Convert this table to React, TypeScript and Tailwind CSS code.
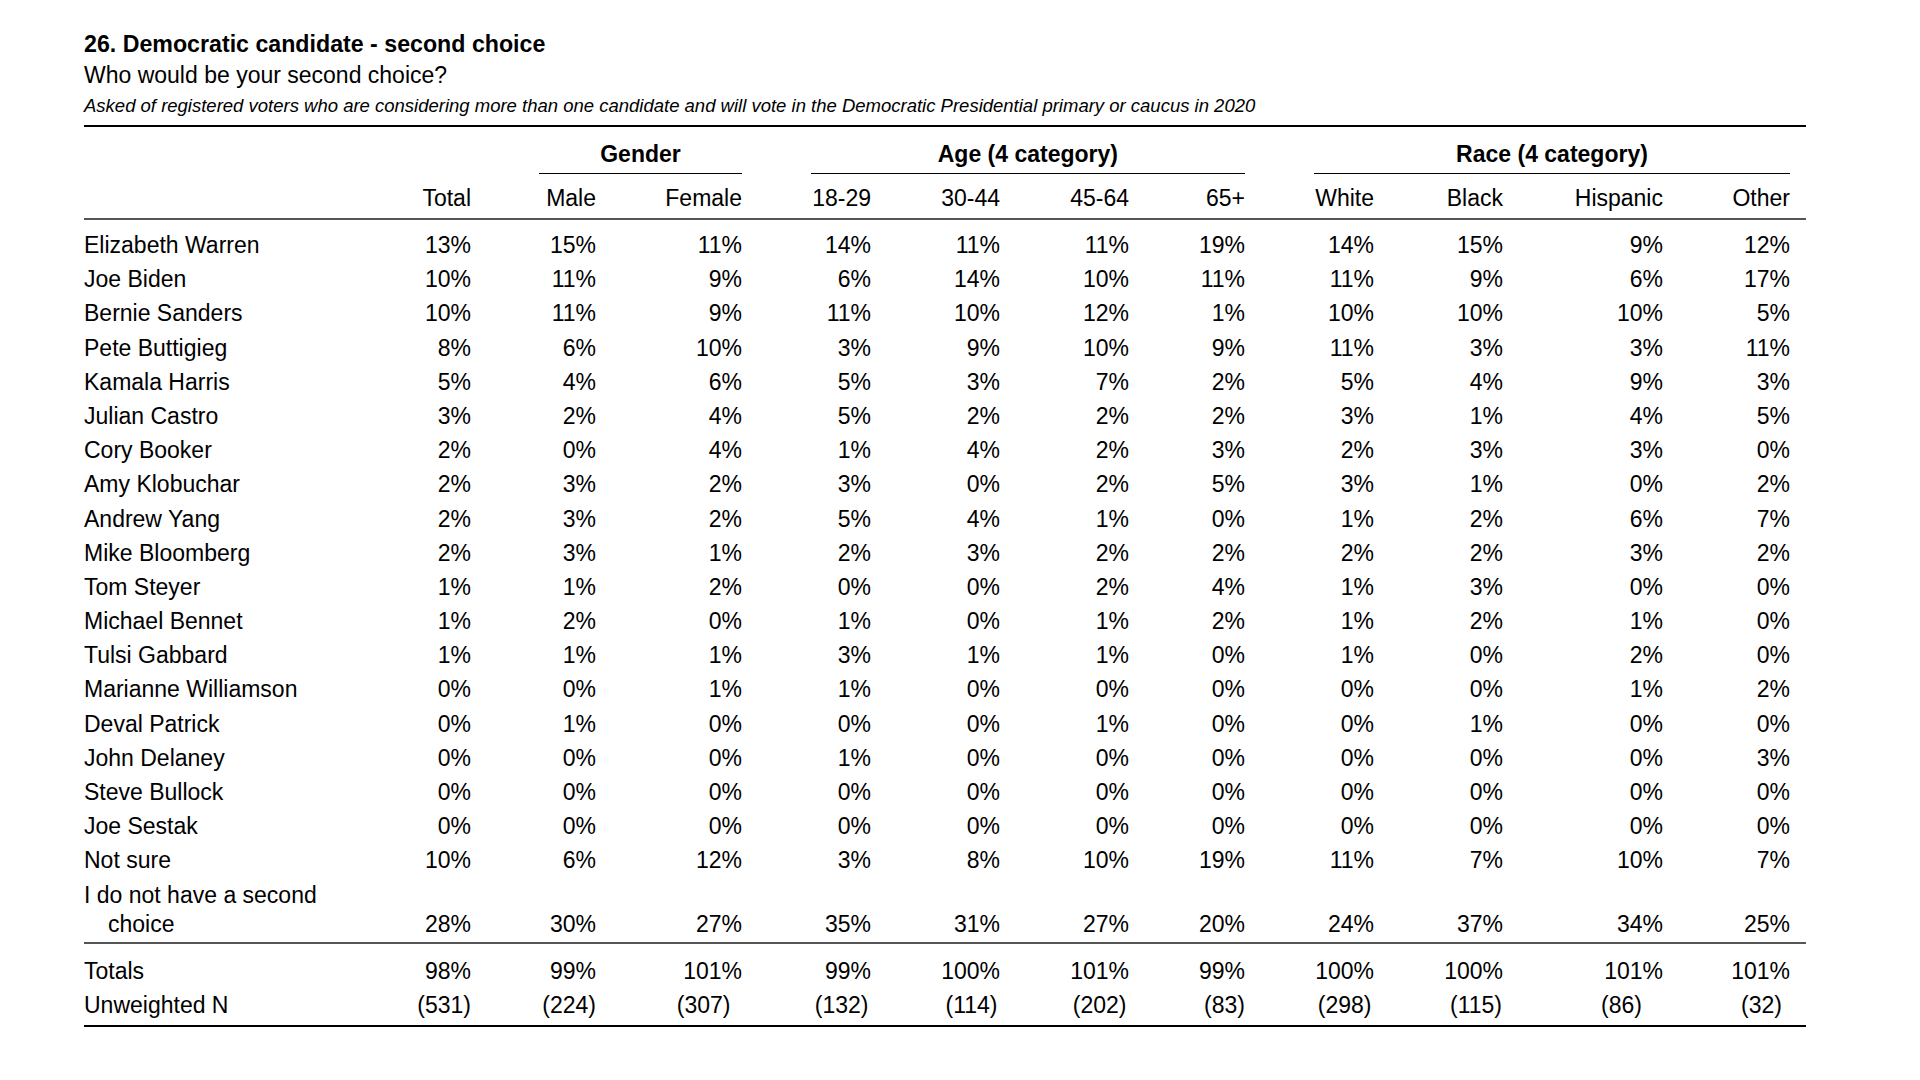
import React from 'react';

const cols =
  'grid grid-cols-[316px_71px_68px_57px_146px_68.7px_60.3px_129px_129px_116px_69px_60px_129px_160px_127px_16px]';

const headers = ['Total', 'Male', 'Female', '18-29', '30-44', '45-64', '65+', 'White', 'Black', 'Hispanic', 'Other'];

// the (n) counts sit centred under the column label
const nPad = ['', '', 'pr-[11.5px]', 'pr-[2.5px]', 'pr-[2.5px]', 'pr-[2.5px]', '', 'pr-[2.5px]', 'pr-[1px]', 'pr-[21px]', 'pr-[8px]'];

const rows: [string, number[]][] = [
  ['Elizabeth Warren', [13, 15, 11, 14, 11, 11, 19, 14, 15, 9, 12]],
  ['Joe Biden', [10, 11, 9, 6, 14, 10, 11, 11, 9, 6, 17]],
  ['Bernie Sanders', [10, 11, 9, 11, 10, 12, 1, 10, 10, 10, 5]],
  ['Pete Buttigieg', [8, 6, 10, 3, 9, 10, 9, 11, 3, 3, 11]],
  ['Kamala Harris', [5, 4, 6, 5, 3, 7, 2, 5, 4, 9, 3]],
  ['Julian Castro', [3, 2, 4, 5, 2, 2, 2, 3, 1, 4, 5]],
  ['Cory Booker', [2, 0, 4, 1, 4, 2, 3, 2, 3, 3, 0]],
  ['Amy Klobuchar', [2, 3, 2, 3, 0, 2, 5, 3, 1, 0, 2]],
  ['Andrew Yang', [2, 3, 2, 5, 4, 1, 0, 1, 2, 6, 7]],
  ['Mike Bloomberg', [2, 3, 1, 2, 3, 2, 2, 2, 2, 3, 2]],
  ['Tom Steyer', [1, 1, 2, 0, 0, 2, 4, 1, 3, 0, 0]],
  ['Michael Bennet', [1, 2, 0, 1, 0, 1, 2, 1, 2, 1, 0]],
  ['Tulsi Gabbard', [1, 1, 1, 3, 1, 1, 0, 1, 0, 2, 0]],
  ['Marianne Williamson', [0, 0, 1, 1, 0, 0, 0, 0, 0, 1, 2]],
  ['Deval Patrick', [0, 1, 0, 0, 0, 1, 0, 0, 1, 0, 0]],
  ['John Delaney', [0, 0, 0, 1, 0, 0, 0, 0, 0, 0, 3]],
  ['Steve Bullock', [0, 0, 0, 0, 0, 0, 0, 0, 0, 0, 0]],
  ['Joe Sestak', [0, 0, 0, 0, 0, 0, 0, 0, 0, 0, 0]],
  ['Not sure', [10, 6, 12, 3, 8, 10, 19, 11, 7, 10, 7]],
];

const noSecond = [28, 30, 27, 35, 31, 27, 20, 24, 37, 34, 25];
const totals = [98, 99, 101, 99, 100, 101, 99, 100, 100, 101, 101];
const counts = [531, 224, 307, 132, 114, 202, 83, 298, 115, 86, 32];

// puts the 11 value cells into the grid, leaving the spacer columns empty
function withSpacers(cells: React.ReactNode[], pads?: string[]) {
  const out: React.ReactNode[] = [];
  cells.forEach((c, i) => {
    out.push(
      <div key={i} className={'text-right whitespace-nowrap ' + (pads ? pads[i] : '')}>
        {c}
      </div>
    );
    if (i === 0 || i === 2 || i === 6) out.push(<div key={'s' + i} />);
  });
  out.push(<div key="end" />);
  return out;
}

export default function App() {
  return (
    <div className="min-h-screen bg-white text-black font-['Liberation_Sans',Arial,sans-serif]">
      <div className="w-[1722px] ml-[84px] pt-[29px]">
        <div className="text-[23.2px] leading-[31px] font-bold">26. Democratic candidate - second choice</div>
        <div className="text-[23px] leading-[31px]">Who would be your second choice?</div>
        <div className="mt-[2px] text-[18.5px] leading-[25px] italic">
          Asked of registered voters who are considering more than one candidate and will vote in the Democratic
          Presidential primary or caucus in 2020
        </div>
        <div className="mt-[7px] h-[2px] bg-black" />

        <div className="text-[23px]">
          <div className={cols + ' font-bold leading-[28px]'}>
            <div className="col-[4/6] pt-[13px] pb-[5px] border-b border-black text-center">Gender</div>
            <div className="col-[7/11] pt-[13px] pb-[5px] border-b border-black text-center">Age (4 category)</div>
            <div className="col-[12/16] pt-[13px] pb-[5px] border-b border-black text-center">Race (4 category)</div>
          </div>
          <div className={cols + ' leading-[28px] pt-[10px] pb-[6px]'}>
            <div />
            {withSpacers(headers)}
          </div>
          <div className="h-[2px] bg-[#555]" />

          <div className="mt-[8px]">
            {rows.map(([name, vals]) => (
              <div key={name} className={cols + ' leading-[28.1px] py-[3.05px]'}>
                <div>{name}</div>
                {withSpacers(vals.map((v) => v + '%'))}
              </div>
            ))}
            <div className={cols + ' items-end leading-[29px] pt-[3px]'}>
              <div className="max-w-[250px] pl-[24px] -indent-[24px]">I do not have a second choice</div>
              {withSpacers(noSecond.map((v) => v + '%'))}
            </div>
          </div>

          <div className="mt-[3px] h-[2px] bg-[#555]" />

          <div className="mt-[10px]">
            <div className={cols + ' leading-[28.1px] py-[3.05px]'}>
              <div>Totals</div>
              {withSpacers(totals.map((v) => v + '%'))}
            </div>
            <div className={cols + ' leading-[28.1px] py-[3.05px]'}>
              <div>Unweighted N</div>
              {withSpacers(
                counts.map((n) => '(' + n + ')'),
                nPad
              )}
            </div>
          </div>
          <div className="mt-[3px] h-[2px] bg-black" />
        </div>
      </div>
    </div>
  );
}
